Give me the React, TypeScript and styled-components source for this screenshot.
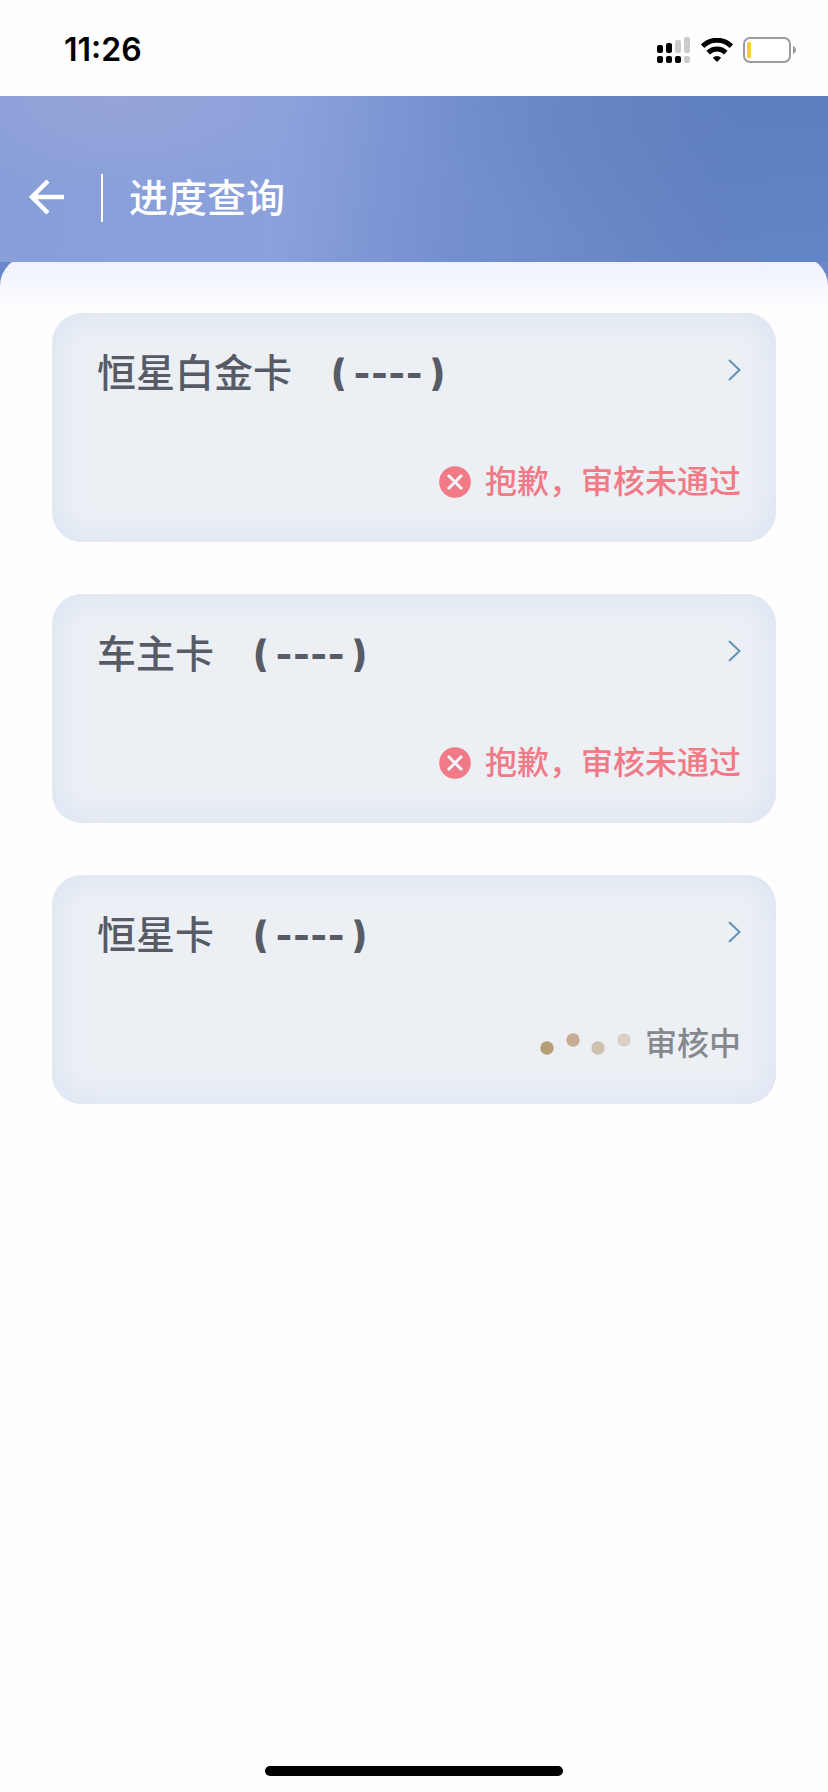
import React from "react";
import styled, { createGlobalStyle } from "styled-components";

const GlobalStyle = createGlobalStyle`
  * { box-sizing: border-box; }
  body {
    margin: 0;
    background: #fefefe;
    font-family: Inter, "Noto Sans CJK SC", sans-serif;
  }
`;

const Screen = styled.div`
  display: flex;
  flex-direction: column;
  min-height: 100vh;
`;

const StatusBar = styled.div`
  display: flex;
  align-items: center;
  justify-content: space-between;
  height: 96px;
  padding: 4px 31px 0 64px;
  background: #fefefe;
`;

const Clock = styled.time`
  font-size: 32px;
  line-height: 40px;
  font-weight: 600;
  color: #000;
`;

const StatusIcons = styled.div`
  display: flex;
  align-items: center;
  gap: 10px;
`;

const Header = styled.header`
  position: relative;
  z-index: 1;
  display: flex;
  align-items: center;
  height: 166px;
  padding: 38px 28px 0;
  color: #fff;
  background:
    radial-gradient(ellipse 24% 60% at 14% 0%, #95a4d9 0%, #94a4d9aa 50%, #8ba1da00 100%),
    radial-gradient(ellipse 50% 110% at 100% 0%, #5b7cbccc 0%, #6080c000 100%),
    linear-gradient(97deg, #879ed8 0%, #8ba1db 34%, #8199d5 43%, #738fd0 56%, #6b89c8 72%, #6484c5 86%, #6486c8 100%);
`;

const BackButton = styled.button`
  display: flex;
  padding: 0;
  border: 0;
  background: none;
  color: inherit;
  cursor: pointer;
`;

const Divider = styled.span`
  width: 2px;
  height: 48px;
  margin: 0 26px 0 36px;
  background: #fff;
`;

const PageTitle = styled.h1`
  margin: 0;
  font-size: 39px;
  line-height: 48px;
  font-weight: 500;
`;

const SheetBackdrop = styled.div`
  margin-top: -6px;
  background: linear-gradient(#6a88ca 0, #6a88ca 40px, #fefefe 40px);
`;

const Sheet = styled.main`
  padding: 57px 52px 0;
  border-radius: 30px 30px 0 0;
  background: linear-gradient(#eff2fe 6px, #fefefe 54px);
`;

const CardList = styled.ul`
  display: flex;
  flex-direction: column;
  gap: 52px;
  margin: 0;
  padding: 0;
  list-style: none;
`;

const Card = styled.a`
  display: flex;
  flex-direction: column;
  justify-content: space-between;
  height: 229px;
  padding: 34px 35px 36px 45px;
  border-radius: 30px;
  background: #ecf0f5;
  box-shadow: inset 0 0 36px #d9e2f1;
  text-decoration: none;
`;

const CardTop = styled.div`
  display: flex;
  align-items: flex-start;
  justify-content: space-between;
  color: #6391b5;
`;

const CardName = styled.h2`
  display: flex;
  gap: 39px;
  margin: 0;
  font-size: 39px;
  line-height: 52px;
  font-weight: 500;
  color: #575b66;
`;

const CardNumber = styled.span`
  font-size: 37px;
  font-weight: 800;
`;

const Status = styled.div<{ $tone: "failed" | "pending" }>`
  display: flex;
  align-items: center;
  justify-content: flex-end;
  gap: 14px;
  font-size: 32px;
  line-height: 48px;
  font-weight: 500;
  color: ${(p) => (p.$tone === "failed" ? "#f07a86" : "#85888d")};
`;

const HomeIndicator = styled.div`
  width: 36%;
  height: 10px;
  margin: auto auto 16px;
  border-radius: 5px;
  background: #000;
`;

const SignalIcon = () => (
  <svg width="34" height="28" viewBox="0 0 34 28" aria-hidden="true">
    <g fill="#000">
      <rect x="0" y="9" width="6" height="8" rx="2" />
      <rect x="9" y="7" width="6" height="10" rx="2" />
      <rect x="0" y="20" width="6" height="7" rx="2" />
      <rect x="9" y="20" width="6" height="7" rx="2" />
      <rect x="18" y="20" width="6" height="7" rx="2" />
    </g>
    <g fill="#cbcbcb">
      <rect x="18" y="4" width="6" height="13" rx="2" />
      <rect x="27" y="1" width="6" height="16" rx="2" />
      <rect x="27" y="20" width="6" height="7" rx="2" />
    </g>
  </svg>
);

const WifiIcon = () => (
  <svg width="32" height="24" viewBox="0 0 32 24" aria-hidden="true">
    <g fill="none" stroke="#000" strokeWidth="5">
      <path d="M1.600 8.200a20.500 20.500 0 0 1 28.800 0" />
      <path d="M7.200 14.600a12.600 12.600 0 0 1 17.600 0" />
    </g>
    <path d="M16 24l-4.200-4.200a6 6 0 0 1 8.400 0z" fill="#000" />
  </svg>
);

const BatteryIcon = () => (
  <svg width="54" height="26" viewBox="0 0 54 26" aria-hidden="true">
    <rect x="1" y="1" width="46" height="24" rx="6" fill="#fff" stroke="#9b9b9b" strokeWidth="2" />
    <rect x="4" y="5" width="4" height="16" rx="1" fill="#f8cb46" />
    <path d="M50 9c4 1.500 4 6.500 0 8z" fill="#9b9b9b" />
  </svg>
);

const BackIcon = () => (
  <svg width="37" height="40" viewBox="0 0 37 40" fill="none" stroke="currentColor" strokeWidth="4.400" aria-hidden="true">
    <path d="M36 19H4M20 3L4 19l16 16" />
  </svg>
);

const ChevronIcon = () => (
  <svg width="13" height="46" viewBox="0 0 13 46" fill="none" stroke="currentColor" strokeWidth="2" aria-hidden="true">
    <path d="M1 13l10.500 10L1 33" />
  </svg>
);

const FailedIcon = () => (
  <svg width="32" height="32" viewBox="0 0 32 32" aria-hidden="true">
    <circle cx="16" cy="16" r="15.800" fill="#f07a86" />
    <path d="M9 9l14 14M23 9L9 23" stroke="#f1f4f8" strokeWidth="3" />
  </svg>
);

const PendingIcon = () => (
  <svg width="92" height="24" viewBox="0 0 92 24" aria-hidden="true">
    <circle cx="8" cy="16" r="6.700" fill="#b79d75" />
    <circle cx="34" cy="8" r="6.700" fill="#c5ae93" />
    <circle cx="59" cy="16" r="6.700" fill="#cfc1b0" />
    <circle cx="85" cy="8" r="6.700" fill="#d9d1c7" />
  </svg>
);

type Application = { name: string; number: string; tone: "failed" | "pending"; status: string };

const applications: Application[] = [
  { name: "恒星白金卡", number: "( ---- )", tone: "failed", status: "抱歉，审核未通过" },
  { name: "车主卡", number: "( ---- )", tone: "failed", status: "抱歉，审核未通过" },
  { name: "恒星卡", number: "( ---- )", tone: "pending", status: "审核中" },
];

export default function App() {
  return (
    <Screen>
      <GlobalStyle />
      <StatusBar>
        <Clock>11:26</Clock>
        <StatusIcons>
          <SignalIcon />
          <WifiIcon />
          <BatteryIcon />
        </StatusIcons>
      </StatusBar>
      <Header>
        <BackButton type="button" aria-label="返回">
          <BackIcon />
        </BackButton>
        <Divider />
        <PageTitle>进度查询</PageTitle>
      </Header>
      <SheetBackdrop>
        <Sheet>
          <CardList>
            {applications.map((item) => (
              <li key={item.name}>
                <Card href="#">
                  <CardTop>
                    <CardName>
                      {item.name}
                      <CardNumber>{item.number}</CardNumber>
                    </CardName>
                    <ChevronIcon />
                  </CardTop>
                  <Status $tone={item.tone}>
                    {item.tone === "failed" ? <FailedIcon /> : <PendingIcon />}
                    {item.status}
                  </Status>
                </Card>
              </li>
            ))}
          </CardList>
        </Sheet>
      </SheetBackdrop>
      <HomeIndicator />
    </Screen>
  );
}
